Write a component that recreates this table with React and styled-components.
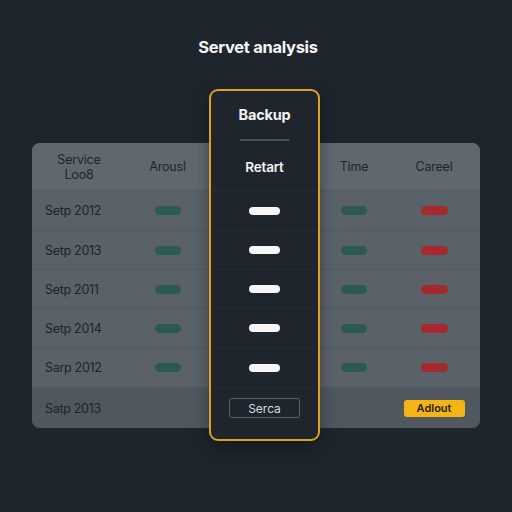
import React from "react";
import styled, { createGlobalStyle } from "styled-components";

const GlobalStyle = createGlobalStyle`
  html, body {
    margin: 0;
    padding: 0;
    background: #1f252d;
  }
  body {
    font-family: "Inter", "Open Sans", "Liberation Sans", sans-serif;
  }
`;

const COLS = "94px 83px 111px 68px 92px";

const Page = styled.div`
  width: 512px;
  height: 512px;
  background: #1f252d;
  display: flex;
  flex-direction: column;
  align-items: center;
  padding-top: 37px;
  box-sizing: border-box;
`;

const Title = styled.h1`
  margin: 0;
  height: 20px;
  line-height: 20px;
  font-size: 16.5px;
  font-weight: 700;
  color: #f4f5f6;
  letter-spacing: -0.3px;
  transform: translateX(2px);
`;

const TableWrap = styled.div`
  position: relative;
  margin-top: 86px;
  width: 448px;
`;

const Table = styled.div`
  border-radius: 8px;
  overflow: hidden;
  background: #5b6168;
`;

const Row = styled.div`
  display: grid;
  grid-template-columns: ${COLS};
  align-items: center;
  height: ${(p) => p.h}px;
  background: ${(p) => (p.header ? "#60676f" : p.last ? "#51575e" : "#5b6168")};
  border-top: ${(p) => (p.header ? "none" : "1px solid #545a61")};
  box-sizing: border-box;
`;

const HeadCell = styled.div`
  text-align: center;
  font-size: 12.5px;
  line-height: 15px;
  color: #20252b;
  letter-spacing: -0.2px;
`;

const Cell = styled.div`
  display: flex;
  justify-content: ${(p) => (p.left ? "flex-start" : "center")};
  padding-left: ${(p) => (p.left ? "13px" : "0")};
  font-size: 12.5px;
  letter-spacing: -0.3px;
  color: #1e2329;
`;

const Pill = styled.span`
  display: block;
  width: ${(p) => p.w || 26}px;
  height: ${(p) => p.hh || 9}px;
  border-radius: 5px;
  background: ${(p) => p.color};
`;

const ActionButton = styled.button`
  width: 61px;
  height: 17px;
  border: none;
  border-radius: 3px;
  background: #f3b414;
  color: #2a2410;
  font-family: inherit;
  font-size: 11px;
  font-weight: 600;
  padding: 0;
`;

const Highlight = styled.div`
  position: absolute;
  left: 177px;
  top: -54px;
  width: 111px;
  height: 352px;
  box-sizing: border-box;
  border: 2px solid #d9a21f;
  border-radius: 9px;
  background: #1f252d;
  display: flex;
  flex-direction: column;
  box-shadow: 0 6px 16px rgba(0, 0, 0, 0.35);
`;

const HighlightTop = styled.div`
  height: 52px;
  display: flex;
  flex-direction: column;
  align-items: center;
  justify-content: flex-end;
  box-sizing: border-box;
`;

const HighlightTitle = styled.div`
  font-size: 14.5px;
  font-weight: 700;
  color: #f2f3f4;
  letter-spacing: -0.2px;
  margin-bottom: 16px;
`;

const Divider = styled.div`
  width: 49px;
  height: 2px;
  background: #49505a;
  margin-bottom: 2px;
`;

const HighlightCell = styled.div`
  height: ${(p) => p.h}px;
  display: flex;
  align-items: center;
  justify-content: center;
  border-top: ${(p) => (p.first ? "none" : "1px solid #262c34")};
  box-sizing: border-box;
  font-size: 13.5px;
  font-weight: 600;
  color: #f2f3f4;
  letter-spacing: -0.2px;
`;

const GhostButton = styled.button`
  width: 71px;
  height: 20px;
  border: 1px solid #5a6169;
  border-radius: 3px;
  background: transparent;
  color: #d6d9dc;
  font-family: inherit;
  font-size: 12px;
  padding: 0;
`;

const rows = [
  { label: "Setp 2012", h: 40 },
  { label: "Setp 2013", h: 39 },
  { label: "Setp 2011", h: 39 },
  { label: "Setp 2014", h: 39 },
  { label: "Sarp 2012", h: 40 },
];

const GREEN = "#2b5a55";
const RED = "#a5292d";

export default function App() {
  return (
    <>
      <GlobalStyle />
      <Page>
        <Title>Servet analysis</Title>
        <TableWrap>
          <Table>
            <Row header h={47}>
              <HeadCell>
                Service
                <br />
                Loo8
              </HeadCell>
              <HeadCell>Arousl</HeadCell>
              <HeadCell />
              <HeadCell>Time</HeadCell>
              <HeadCell>Careel</HeadCell>
            </Row>
            {rows.map((r, i) => (
              <Row key={i} h={r.h}>
                <Cell left>{r.label}</Cell>
                <Cell>
                  <Pill color={GREEN} />
                </Cell>
                <Cell />
                <Cell>
                  <Pill color={GREEN} />
                </Cell>
                <Cell>
                  <Pill color={RED} w={27} />
                </Cell>
              </Row>
            ))}
            <Row last h={41}>
              <Cell left>Satp 2013</Cell>
              <Cell />
              <Cell />
              <Cell />
              <Cell>
                <ActionButton>Adlout</ActionButton>
              </Cell>
            </Row>
          </Table>
          <Highlight>
            <HighlightTop>
              <HighlightTitle>Backup</HighlightTitle>
              <Divider />
            </HighlightTop>
            <HighlightCell first h={47}>
              Retart
            </HighlightCell>
            {rows.map((r, i) => (
              <HighlightCell key={i} h={r.h}>
                <Pill color="#f6f6f6" w={31} hh={8} />
              </HighlightCell>
            ))}
            <HighlightCell h={41}>
              <GhostButton>Serca</GhostButton>
            </HighlightCell>
          </Highlight>
        </TableWrap>
      </Page>
    </>
  );
}
